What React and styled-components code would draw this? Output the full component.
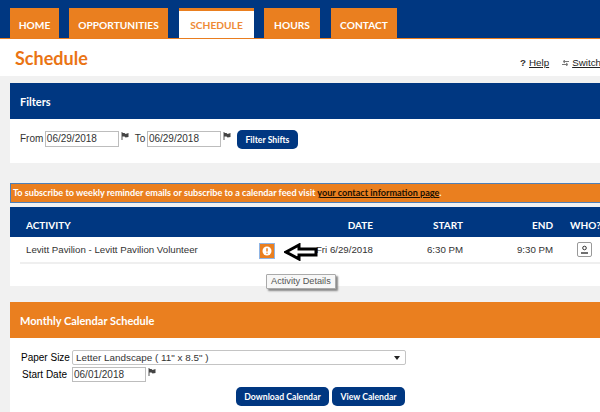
import React from "react";
import styled, { createGlobalStyle } from "styled-components";

const Global = createGlobalStyle`
  html, body { margin: 0; padding: 0; width: 600px; height: 412px; overflow: hidden; background: #f1f1f1; }
  body { font-family: "Liberation Sans", Arial, sans-serif; color: #333; }
`;
const Page = styled.div`width: 600px; height: 412px; overflow: hidden; background: #f1f1f1;`;
const TopBar = styled.nav`
  height: 39px; padding: 9px 0 0 10px; box-sizing: border-box;
  display: flex; align-items: flex-end; background: #003781; border-bottom: 1px solid #e97d1f;
`;
const Tab = styled.a`
  height: 30px; width: ${p => p.$w}px; margin-right: ${p => p.$gap}px; box-sizing: border-box;
  display: flex; align-items: center; justify-content: center;
  font: 700 10.2px Lato, "Open Sans", sans-serif;
  background: ${p => (p.$active ? "#fff" : "#ea7f1f")};
  color: ${p => (p.$active ? "#ee8a36" : "#fff")};
  border-top: 3px solid #ea7f1f;
`;
const Header = styled.header`
  height: 37px; background: #fff; display: flex; justify-content: space-between; align-items: flex-start; box-sizing: border-box;
  padding: 7px 0 0 15px;
`;
const Title = styled.h1`
  margin: 0; font: 700 18px/24px Lato, sans-serif; color: #ea7414;
`;
const HelpLinks = styled.div`
  display: flex; gap: 13px; padding-top: 10px; font-size: 9.8px; line-height: 14px; color: #222; width: 80px; white-space: nowrap;
`;
const HelpItem = styled.span`display: flex; align-items: center; gap: 3px;`;
const Glyph = styled.span`font-weight: 700; color: #333;`;
const Link = styled.a`text-decoration: underline; color: inherit;`;
const Main = styled.main`padding: 7px 0 0 10px;`;
const Card = styled.section`background: #fff; position: relative;`;
const CardHead = styled.h2`
  margin: 0; height: 36px; display: flex; align-items: center; padding-left: 10px;
  font: 700 11px Lato, sans-serif; color: #fff;
  background: ${p => (p.$orange ? "#ea7f1f" : "#003781")};
`;
const FilterBody = styled.div`
  height: 44px; box-sizing: border-box; padding-top: 12px; padding-left: 10px;
  display: flex; align-items: flex-start; font-size: 10px; color: #333;
`;
const Label = styled.span`line-height: 16px; margin-right: 1.5px;`;
const DateInput = styled.span`
  width: 74px; height: ${p => p.$h || 16}px; box-sizing: border-box; border: 1px solid #bdbdbd;
  display: block; padding-left: 1px; font-size: 10px; line-height: ${p => (p.$h || 16) - 2}px; color: #333; background: #fff; flex: none;
`;
const Flag = styled.svg`width: 8px; height: 8px; margin: 1px 6px 0 2px; flex: none;`;
const Btn = styled.button`
  height: 19px; border: 0; border-radius: 5px; background: #003781; color: #fff;
  font: 700 8.7px Lato, sans-serif; padding: 0; width: ${p => p.$w}px; margin-top: ${p => p.$mt || 0}px;
`;
const Notice = styled.div`
  margin-top: 20px; height: 20px; box-sizing: border-box; border: 1px solid #4d7fb8; border-right: 0;
  background: #ea7f1f; color: #fff; font: 700 9.1px/18px Lato, sans-serif; padding-left: 2px; white-space: nowrap;
`;
const NoticeLink = styled.a`color: #1a1000; text-decoration: underline;`;
const TableCard = styled(Card)`margin-top: 4px; height: 79px;`;
const Cols = styled.div`
  display: grid; grid-template-columns: 257px 90px 90px 90px 17px 30px; align-items: center;
`;
const HeadRow = styled(Cols)`
  height: 30px; box-sizing: border-box; padding: 6px 0 0 16px; background: #003781; color: #fff; font: 700 10px Lato, sans-serif;
`;
const BodyRow = styled(Cols)`
  height: 27px; margin-left: 10px; padding-left: 6px; border-bottom: 2px solid #efefef;
  box-sizing: border-box; font-size: 9.7px; color: #333;
`;
const Right = styled.span`text-align: right; white-space: nowrap;`;
const InfoBtn = styled.span`
  position: absolute; left: 249px; top: 36px; width: 16px; height: 16px; box-sizing: border-box;
  border: 1px solid #8fb4e4; background: #ea7f1f; display: flex; align-items: center; justify-content: center;
`;
const WhoBtn = styled.span`
  width: 15px; height: 15px; box-sizing: border-box; border: 1px solid #999; border-radius: 2px; background: #fff;
  display: flex; align-items: center; justify-content: center; margin-left: 7px;
`;
const Arrow = styled.svg`position: absolute; left: 274px; top: 36px; width: 34px; height: 18px;`;
const Tooltip = styled.div`
  position: absolute; left: 256px; top: 67px; height: 15px; box-sizing: border-box; padding: 0 4px; border: 1px solid #aaa; border-radius: 1px;
  background: #f7f7f7; box-shadow: 2px 2px 2px #888; font-size: 9.2px; line-height: 13px; color: #555; white-space: nowrap;
`;
const Monthly = styled(Card)`margin-top: 16px; height: 120px;`;
const MonthBody = styled.div`padding: 12px 0 0 11px;`;
const FormRow = styled.div`display: flex; align-items: flex-start; height: ${p => p.$h}px; margin-bottom: ${p => p.$mb || 0}px;`;
const FormLabel = styled.label`width: 51px; font-size: 10px; line-height: 15px; color: #000; white-space: nowrap; padding-left: ${p => p.$pad || 0}px; box-sizing: border-box;`;
const Select = styled.div`
  width: 334px; height: 15px; box-sizing: border-box; border: 1px solid #c4c4c4; border-radius: 2px; padding: 0 0 0 3px;
  font-size: 9.9px; line-height: 13px; color: #333; display: flex; justify-content: space-between; align-items: center;
`;
const Caret = styled.span`width: 0; height: 0; border: 3px solid transparent; border-top: 4px solid #222; border-bottom: 0; margin-right: 5px;`;
const Actions = styled.div`display: flex; gap: 3px; margin: 5px 0 0 215px;`;

const FlagIcon = () => (
  <Flag viewBox="0 0 8 8"><path d="M1 0v8" stroke="#555" strokeWidth="1"/><path d="M1 1h2.5l1 1 3-1v4l-3 .5-1-1H1z" fill="#444"/></Flag>
);

export default function App() {
  return (
    <Page>
      <Global />
      <TopBar>
        <Tab $w={49} $gap={10}>HOME</Tab>
        <Tab $w={99} $gap={11}>OPPORTUNITIES</Tab>
        <Tab $w={75} $gap={10} $active>SCHEDULE</Tab>
        <Tab $w={56} $gap={11}>HOURS</Tab>
        <Tab $w={66} $gap={0}>CONTACT</Tab>
      </TopBar>
      <Header>
        <Title>Schedule</Title>
        <HelpLinks>
          <HelpItem><Glyph>?</Glyph><Link>Help</Link></HelpItem>
          <HelpItem>
            <svg width="7" height="6" viewBox="0 0 7 6"><path d="M7 1.5H2M3 0 1 1.5 3 3M0 4.5h5M4 3l2 1.5L4 6" fill="none" stroke="#777" strokeWidth="1"/></svg>
            <Link>Switch</Link>
          </HelpItem>
        </HelpLinks>
      </Header>
      <Main>
        <Card>
          <CardHead>Filters</CardHead>
          <FilterBody>
            <Label>From</Label><DateInput>06/29/2018</DateInput><FlagIcon />
            <Label>To</Label><DateInput>06/29/2018</DateInput><FlagIcon />
            <Btn $w={61} $mt={-1}>Filter Shifts</Btn>
          </FilterBody>
        </Card>
        <Notice>To subscribe to weekly reminder emails or subscribe to a calendar feed visit <NoticeLink>your contact information page</NoticeLink>.</Notice>
        <TableCard>
          <HeadRow>
            <span>ACTIVITY</span><Right>DATE</Right><Right>START</Right><Right>END</Right><span /><span>WHO?</span>
          </HeadRow>
          <BodyRow>
            <span>Levitt Pavilion - Levitt Pavilion Volunteer</span><Right>Fri 6/29/2018</Right><Right>6:30 PM</Right><Right>9:30 PM</Right><span />
            <WhoBtn>
              <svg width="9" height="9" viewBox="0 0 9 9"><circle cx="4.5" cy="3" r="1.8" fill="none" stroke="#333"/><path d="M1 8h7" stroke="#333" strokeWidth="1.4"/></svg>
            </WhoBtn>
          </BodyRow>
          <InfoBtn>
            <svg width="10" height="10" viewBox="0 0 10 10"><circle cx="5" cy="5" r="4.5" fill="#fff"/><path d="M5 2.3v3.2M5 6.7v1.1" stroke="#ea7f1f" strokeWidth="1.5"/></svg>
          </InfoBtn>
          <Arrow viewBox="0 0 34 18">
            <path d="M2 9 L15 2 V6 H32 V12 H15 V16 Z" fill="#fff" stroke="#000" strokeWidth="3" strokeLinejoin="miter"/>
          </Arrow>
          <Tooltip>Activity Details</Tooltip>
        </TableCard>
        <Monthly>
          <CardHead $orange>Monthly Calendar Schedule</CardHead>
          <MonthBody>
            <FormRow $h={15} $mb={2}><FormLabel>Paper Size</FormLabel><Select>Letter Landscape ( 11" x 8.5" )<Caret /></Select></FormRow>
            <FormRow $h={15}><FormLabel $pad={1}>Start Date</FormLabel><DateInput $h={15}>06/01/2018</DateInput><FlagIcon /></FormRow>
            <Actions><Btn $w={93}>Download Calendar</Btn><Btn $w={73}>View Calendar</Btn></Actions>
          </MonthBody>
        </Monthly>
      </Main>
    </Page>
  );
}
